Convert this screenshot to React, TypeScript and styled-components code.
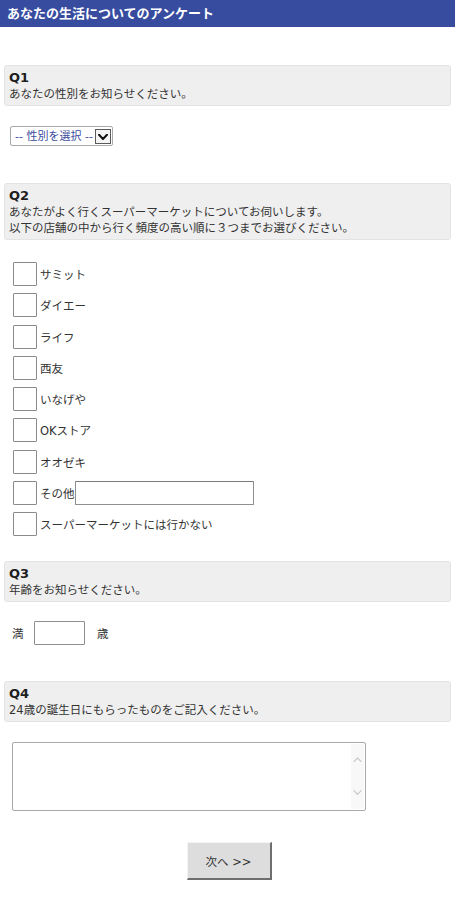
import React from "react";
import styled, { createGlobalStyle } from "styled-components";

const Global = createGlobalStyle`
  html, body { margin: 0; padding: 0; background: #ffffff; }
  body {
    font-family: "DejaVu Sans", "Noto Sans CJK JP", sans-serif;
    color: #333333;
    font-size: 11.5px;
  }
  * { box-sizing: border-box; }
`;

const Page = styled.div`
  width: 455px;
  padding-bottom: 30px;
`;

const Header = styled.header`
  height: 27px;
  background: #374c9f;
  color: #ffffff;
  font-weight: bold;
  font-size: 13px;
  line-height: 27px;
  padding-left: 7px;
  letter-spacing: 0;
`;

const Form = styled.form`
  display: flex;
  flex-direction: column;
`;

const Section = styled.section<{ $mt: number }>`
  display: flex;
  flex-direction: column;
  margin-top: ${(p) => p.$mt}px;
`;

const QBox = styled.div`
  margin: 0 4px;
  background: #efefef;
  border: 1px solid #e3e3e3;
  border-radius: 3px;
  padding: 4px 4px 3px;
  line-height: 16px;
`;

const QNum = styled.div`
  font-weight: bold;
  font-size: 13px;
  color: #1e1e1e;
  line-height: 16px;
`;

const QText = styled.p`
  margin: 0;
  font-size: 11.5px;
  color: #333333;
  line-height: 16px;
`;

const Answer = styled.div<{ $mt: number; $ml: number }>`
  margin-top: ${(p) => p.$mt}px;
  margin-left: ${(p) => p.$ml}px;
`;

const SelectWrap = styled.label`
  position: relative;
  display: inline-flex;
  align-items: center;
  width: 103px;
  height: 20px;
  border: 1px solid #a9a9a9;
  border-radius: 2px;
  background: #ffffff;
`;

const Select = styled.select`
  appearance: none;
  -webkit-appearance: none;
  border: none;
  outline: none;
  background: transparent;
  font-family: inherit;
  font-size: 11px;
  color: #3c4c9e;
  height: 18px;
  width: 100%;
  padding: 0 0 0 4px;
  margin: 0;
`;

const Arrow = styled.span`
  position: absolute;
  right: 1px;
  top: 2px;
  width: 16px;
  height: 15px;
  border: 1px solid #5a5a5a;
  background: #f4f4f4;
  display: flex;
  align-items: center;
  justify-content: center;
  pointer-events: none;
`;

const CheckList = styled.div`
  display: flex;
  flex-direction: column;
  gap: 7.25px;
`;

const CheckRow = styled.label`
  display: flex;
  align-items: center;
  height: 24px;
  font-size: 11.5px;
  color: #333333;
`;

const Box = styled.input.attrs({ type: "checkbox" })`
  appearance: none;
  -webkit-appearance: none;
  width: 24px;
  height: 24px;
  margin: 0 3px 0 0;
  border: 1px solid #8a8a8a;
  border-radius: 1px;
  background: #ffffff;
  flex: none;
`;

const OtherInput = styled.input.attrs({ type: "text" })`
  width: 179px;
  height: 24px;
  margin: 0;
  border: 1px solid #8f8f8f;
  border-top-color: #7a7a7a;
  border-radius: 1px;
  background: #ffffff;
  outline: none;
`;

const AgeRow = styled.div`
  display: flex;
  align-items: center;
  font-size: 11.5px;
  color: #333333;
`;

const AgeInput = styled.input.attrs({ type: "text" })`
  width: 51px;
  height: 24px;
  margin: 0 12px 0 10.5px;
  border: 1px solid #8f8f8f;
  border-radius: 1px;
  background: #ffffff;
  outline: none;
`;

const AreaWrap = styled.div`
  position: relative;
  width: 354px;
  height: 69px;
  border: 1px solid #a9a9a9;
  border-radius: 2px;
  background: #ffffff;
`;

const Area = styled.textarea`
  display: block;
  width: 100%;
  height: 100%;
  border: none;
  outline: none;
  resize: none;
  overflow: hidden;
  background: transparent;
  padding: 2px 16px 2px 3px;
  font-family: inherit;
`;

const ScrollBar = styled.div`
  position: absolute;
  top: 1px;
  right: 1px;
  bottom: 1px;
  width: 13px;
  background: #f8f8f8;
  display: flex;
  flex-direction: column;
  justify-content: space-between;
  align-items: center;
  padding: 13px 0 14px;
`;

const ButtonRow = styled.div`
  display: flex;
  justify-content: center;
  margin-top: 31px;
  padding-left: 3px;
`;

const NextButton = styled.button`
  width: 85px;
  height: 38px;
  background: #dddddd;
  border-style: solid;
  border-width: 1px 2px 2px 1px;
  border-color: #f4f4f4 #6e6e6e #6e6e6e #f4f4f4;
  font-family: inherit;
  font-size: 11.5px;
  color: #333333;
  padding: 0;
`;

const Chevron = ({ up, color, w = 9 }: { up?: boolean; color: string; w?: number }) => (
  <svg width={w} height={w * 0.6} viewBox="0 0 10 6" aria-hidden>
    <path
      d={up ? "M1 5.2 L5 1 L9 5.2" : "M1 0.8 L5 5 L9 0.8"}
      fill="none"
      stroke={color}
      strokeWidth={up || color !== "#111" ? 1.2 : 2}
      strokeLinecap="round"
      strokeLinejoin="round"
    />
  </svg>
);

const stores = [
  "サミット",
  "ダイエー",
  "ライフ",
  "西友",
  "いなげや",
  "OKストア",
  "オオゼキ",
];

export default function App() {
  return (
    <>
      <Global />
      <Page>
        <Header>あなたの生活についてのアンケート</Header>
        <Form onSubmit={(e) => e.preventDefault()}>
          <Section $mt={38}>
            <QBox>
              <QNum>Q1</QNum>
              <QText>あなたの性別をお知らせください。</QText>
            </QBox>
            <Answer $mt={20} $ml={10}>
              <SelectWrap>
                <Select defaultValue="">
                  <option value="">-- 性別を選択 --</option>
                  <option value="m">男性</option>
                  <option value="f">女性</option>
                </Select>
                <Arrow>
                  <Chevron color="#111" w={10} />
                </Arrow>
              </SelectWrap>
            </Answer>
          </Section>

          <Section $mt={37}>
            <QBox>
              <QNum>Q2</QNum>
              <QText>
                あなたがよく行くスーパーマーケットについてお伺いします。
                <br />
                以下の店舗の中から行く頻度の高い順に３つまでお選びください。
              </QText>
            </QBox>
            <Answer $mt={22} $ml={13}>
              <CheckList>
                {stores.map((s) => (
                  <CheckRow key={s}>
                    <Box />
                    {s}
                  </CheckRow>
                ))}
                <CheckRow>
                  <Box />
                  その他
                  <OtherInput />
                </CheckRow>
                <CheckRow>
                  <Box />
                  スーパーマーケットには行かない
                </CheckRow>
              </CheckList>
            </Answer>
          </Section>

          <Section $mt={25}>
            <QBox>
              <QNum>Q3</QNum>
              <QText>年齢をお知らせください。</QText>
            </QBox>
            <Answer $mt={19} $ml={12}>
              <AgeRow>
                満<AgeInput />歳
              </AgeRow>
            </Answer>
          </Section>

          <Section $mt={36}>
            <QBox>
              <QNum>Q4</QNum>
              <QText>24歳の誕生日にもらったものをご記入ください。</QText>
            </QBox>
            <Answer $mt={20} $ml={12}>
              <AreaWrap>
                <Area />
                <ScrollBar>
                  <Chevron up color="#c4c4c4" />
                  <Chevron color="#c4c4c4" />
                </ScrollBar>
              </AreaWrap>
            </Answer>
          </Section>

          <ButtonRow>
            <NextButton type="submit">次へ &gt;&gt;</NextButton>
          </ButtonRow>
        </Form>
      </Page>
    </>
  );
}
